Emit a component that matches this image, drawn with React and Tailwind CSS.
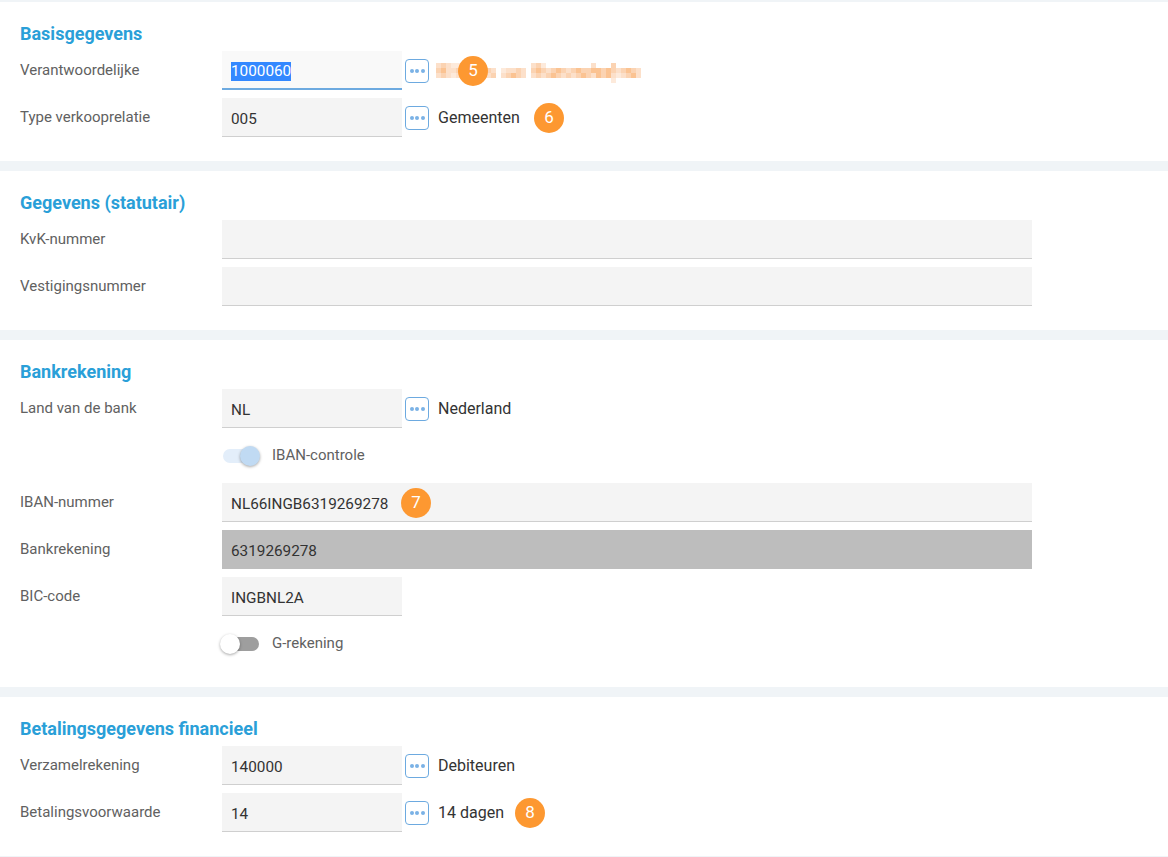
import React from 'react';

const tones = ['#fdeadb', '#fce0ca', '#fbd3b2', '#fbc392'];

// afgeschermde naam, één teken per blokje van 5px
const mosaic = [
  '12100..............120.........1...2.....',
  '231120000021.01121.2321232123223323212321',
  '121010000012.12321.1212321212321323101231',
];

const NameMosaic = () => (
  <svg width="206" height="21" className="absolute top-[12px] left-[214px]">
    {mosaic.map((row, r) =>
      row.split('').map((c, i) =>
        c === '.' ? null : (
          <rect key={`${r}-${i}`} x={i * 5} y={r * 5} width="5" height="5" fill={tones[Number(c)]} />
        )
      )
    )}
    <rect x="175" y="15" width="5" height="5" fill={tones[0]} />
  </svg>
);

const Badge = ({ n, className }) => (
  <span className={`absolute flex h-[30px] w-[30px] items-center justify-center rounded-full bg-[#fd9831] text-[17px] text-white ${className}`}>
    {n}
  </span>
);

const DotsButton = () => (
  <button className="ml-[3px] flex h-6 w-6 shrink-0 items-center justify-center gap-[1.5px] rounded-[4px] border border-[#6daae0] bg-white">
    <span className="h-[4px] w-[4px] rounded-full bg-[#7ab2e6]" />
    <span className="h-[4px] w-[4px] rounded-full bg-[#7ab2e6]" />
    <span className="h-[4px] w-[4px] rounded-full bg-[#7ab2e6]" />
  </button>
);

const Input = ({ value, wide, focused, disabled, children }) => (
  <div
    className={`relative flex h-[39px] shrink-0 items-center px-[9px] pt-[4px] text-[15.3px] text-[#333] ${
      wide ? 'w-[810px]' : 'w-[180px]'
    } ${disabled ? 'border-b border-[#bdbdbd] bg-[#bdbdbd]' : focused ? 'border-b-2 border-[#6daae0] bg-[#f9f9f9]' : 'border-b border-[#cfcfcf] bg-[#f4f4f4]'}`}
  >
    {focused ? <span className="inline-block bg-[#3388ff] leading-[19px] text-white">{value}</span> : value}
    {children}
  </div>
);

const Row = ({ label, children }) => (
  <div className="flex">
    <label className="w-[202px] shrink-0 pt-[9px] text-[15px] leading-[20px] text-[#616161]">{label}</label>
    {children}
  </div>
);

const Lookup = ({ label, value, focused, text, children }) => (
  <Row label={label}>
    <div className="relative flex flex-1 items-center">
      <Input value={value} focused={focused} />
      <DotsButton />
      {text && <span className="ml-[9px] text-[16px] text-[#333]">{text}</span>}
      {children}
    </div>
  </Row>
);

const Toggle = ({ on, label }) => (
  <div className="flex h-[39px] items-center pl-[202px]">
    <div className={`relative ml-[1px] h-[14px] w-[36px] rounded-full ${on ? 'bg-[#e3eefa]' : 'bg-[#9e9e9e]'}`}>
      <span
        className={`absolute top-[-3px] h-5 w-5 rounded-full shadow-[0_1px_3px_rgba(0,0,0,0.35)] ${
          on ? 'right-[-1px] bg-[#c0daf3]' : 'left-[-3px] bg-white'
        }`}
      />
    </div>
    <span className="ml-[13px] text-[15px] text-[#616161]">{label}</span>
  </div>
);

const Section = ({ title, className, children }) => (
  <section className={`bg-white pl-[20px] ${className}`}>
    <h2 className="text-[18px] leading-[20px] font-bold text-[#2a9fd8]">{title}</h2>
    <div className="mt-[7px] flex flex-col gap-[8px]">{children}</div>
  </section>
);

export default function App() {
  return (
    <div className="flex h-[857px] flex-col gap-[10px] overflow-hidden bg-[#f0f4f7] pt-[2px] [font-family:Roboto,sans-serif]">
      <Section title="Basisgegevens" className="h-[159px] pt-[22px]">
        <Lookup label="Verantwoordelijke" value="1000060" focused>
          <NameMosaic />
          <Badge n="5" className="left-[236px] top-[5px]" />
        </Lookup>
        <Lookup label="Type verkooprelatie" value="005" text="Gemeenten">
          <Badge n="6" className="left-[312px] top-[5px]" />
        </Lookup>
      </Section>

      <Section title="Gegevens (statutair)" className="h-[159px] pt-[22px]">
        <Row label="KvK-nummer"><Input wide /></Row>
        <Row label="Vestigingsnummer"><Input wide /></Row>
      </Section>

      <Section title="Bankrekening" className="h-[347px] pt-[22px]">
        <Lookup label="Land van de bank" value="NL" text="Nederland" />
        <Toggle on label="IBAN-controle" />
        <Row label="IBAN-nummer">
          <Input wide value="NL66INGB6319269278">
            <Badge n="7" className="left-[179px] top-[5px]" />
          </Input>
        </Row>
        <Row label="Bankrekening"><Input wide disabled value="6319269278" /></Row>
        <Row label="BIC-code"><Input value="INGBNL2A" /></Row>
        <Toggle label="G-rekening" />
      </Section>

      <Section title="Betalingsgegevens financieel" className="h-[159px] pt-[22px]">
        <Lookup label="Verzamelrekening" value="140000" text="Debiteuren" />
        <Lookup label="Betalingsvoorwaarde" value="14" text="14 dagen">
          <Badge n="8" className="left-[293px] top-[5px]" />
        </Lookup>
      </Section>
    </div>
  );
}
